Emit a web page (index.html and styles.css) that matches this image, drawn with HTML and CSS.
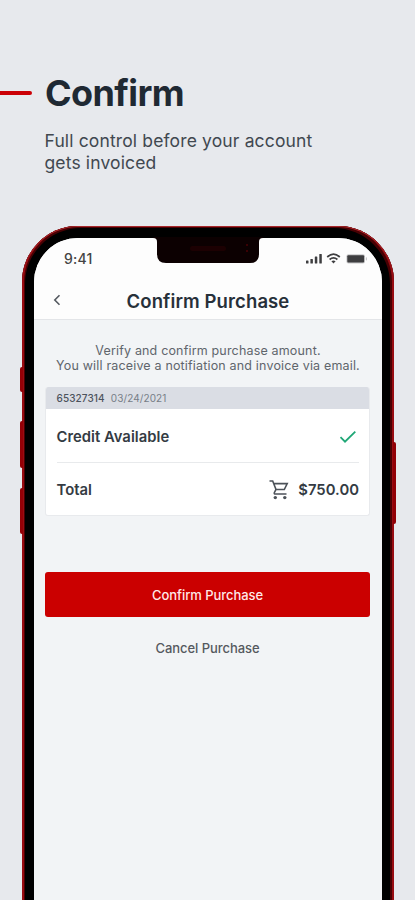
FILE: index.html
```html
<!DOCTYPE html>
<html lang="en">
<head>
<meta charset="utf-8">
<meta name="viewport" content="width=device-width, initial-scale=1">
<title>Confirm</title>
<link rel="stylesheet" href="styles.css">
</head>
<body>
<header class="intro">
  <div class="intro-row"><span class="accent"></span><h1>Confirm</h1></div>
  <p>Full control before your account<br>gets invoiced</p>
</header>
<div class="phone">
  <i class="side mute"></i><i class="side vol-up"></i><i class="side vol-down"></i><i class="side power"></i>
  <svg class="notch" viewBox="0 0 110 27"><path d="M0 0H110V1C107 1 106 2.500 106 5V17Q106 26 97 26H13Q4 26 4 17V5C4 2.500 3 1 0 1Z" fill="#0c0001"/><rect x="37" y="9" width="36" height="5" rx="2.500" fill="#1c0002"/><circle cx="94" cy="8" r="1" fill="#4a0005"/><circle cx="94" cy="14" r="1" fill="#4a0005"/></svg>
  <main class="screen">
    <div class="top">
      <div class="status">
        <span class="time">9:41</span>
        <svg width="62" height="14" viewBox="0 0 62 14" fill="#3e3e40">
          <rect x="0" y="8.500" width="2.500" height="3" rx=".6"/><rect x="4.400" y="7" width="2.500" height="4.500" rx=".6"/><rect x="8.800" y="4.500" width="2.500" height="7" rx=".6"/><rect x="13.300" y="2" width="2.500" height="9.500" rx=".6"/>
          <g fill="none" stroke="#3e3e40" stroke-width="1.700"><path d="M21.200 5Q27.500-.6 33.800 5"/><path d="M23.600 7.500Q27.500 4.200 31.400 7.500"/></g><path d="M25.400 9.200Q27.500 7.600 29.600 9.200L27.500 11.500Z"/>
          <rect x="40.400" y="2.200" width="18.600" height="9.300" rx="2" fill="#c9c9ca"/><rect x="41.300" y="3.200" width="16.800" height="7.300" rx="1"/><rect x="59.800" y="5.200" width="1.200" height="3.200" rx=".6" fill="#c9c9ca"/>
        </svg>
      </div>
      <div class="nav">
        <svg class="back" width="8" height="12" viewBox="0 0 8 12"><path d="M6.500 1.300L1.800 6L6.500 10.700" fill="none" stroke="#555a61" stroke-width="1.600"/></svg>
        <h2>Confirm Purchase</h2>
      </div>
    </div>
    <p class="note">Verify and confirm purchase amount.<br>You will raceive a notifiation and invoice via email.</p>
    <section class="card">
      <div class="card-head"><b>65327314</b><span>03/24/2021</span></div>
      <div class="row first"><span>Credit Available</span>
        <svg width="18" height="14" viewBox="0 0 18 14"><path d="M1.500 7.200L6 11.700L16.300 1.700" fill="none" stroke="#1fa776" stroke-width="1.800"/></svg>
      </div>
      <div class="row"><span>Total</span>
        <span class="price"><svg width="20" height="20" viewBox="0 0 20 20"><path d="M.5 1H3.700L7 9.500L5.300 12.700Q5 14 6.300 14H17.500M4.500 3.600H18.200L15.300 9.500H7" fill="none" stroke="#4c5259" stroke-width="1.600"/><circle cx="6.300" cy="17.600" r="1.700" fill="#4c5259"/><circle cx="15.800" cy="17.600" r="1.700" fill="#4c5259"/></svg><b>$750.00</b></span>
      </div>
    </section>
    <button class="confirm">Confirm Purchase</button>
    <button class="cancel">Cancel Purchase</button>
  </main>
</div>
</body>
</html>
```
FILE: styles.css
```css
* { box-sizing: border-box; }
body { margin: 0; height: 900px; overflow: hidden; background: #e7e9ed; font-family: Inter, "Liberation Sans", sans-serif; color: #2b323b; }
h1, h2, p { margin: 0; }
svg { display: block; flex: none; }
.intro { height: 226px; padding-top: 71px; }
.intro-row { display: flex; align-items: center; height: 44px; }
.accent { width: 32px; height: 4px; margin-right: 13px; background: #cb0006; border-radius: 0 2px 2px 0; }
h1 { font-size: 36px; line-height: 44px; font-weight: 700; letter-spacing: -.6px; color: #1f2933; }
.intro p { margin: 15px 0 0 44.500px; font-size: 17.500px; line-height: 22px; letter-spacing: .14px; color: #414850; }
.phone { position: relative; width: 372px; height: 674px; margin-left: 22px; padding: 12px 12px 0; border-radius: 56px 56px 0 0; background: #000; box-shadow: inset 0 1px 0 #a8272b, inset 2px 0 0 #990c12, inset -2px 0 0 #990c12, inset 3px 2px 0 #480003, inset -4px 2px 0 #480003; }
.screen { height: 662px; background: #f2f4f6; border-radius: 44px 44px 0 0; overflow: hidden; }
.notch { position: absolute; left: 131px; top: 11px; width: 110px; height: 27px; }
.side { position: absolute; left: -2px; width: 3px; background: #930006; border-radius: 2px 0 0 2px; }
.mute { top: 141px; height: 25px; }
.vol-up { top: 195px; height: 47px; }
.vol-down { top: 262px; height: 46px; }
.power { left: auto; right: -2px; top: 216px; height: 82px; border-radius: 0 2px 2px 0; }
.top { height: 82px; background: #fdfdfd; border-bottom: 1px solid #e3e5e8; }
.status { height: 42px; padding: 0 14px 0 30px; display: flex; justify-content: space-between; align-items: center; }
.time { font-size: 14px; line-height: 18px; letter-spacing: .2px; font-weight: 500; color: #444; }
.nav { height: 40px; display: grid; grid-template-columns: 27px 1fr 27px; align-items: center; }
.back { justify-self: end; margin-bottom: 1px; }
h2 { text-align: center; font-size: 18.500px; line-height: 22px; font-weight: 600; letter-spacing: .1px; color: #27303a; padding-top: 2px; }
.note { margin-top: 23px; text-align: center; font-size: 12.500px; line-height: 15px; letter-spacing: .17px; color: #60656c; white-space: nowrap; }
.card { margin: 14px 12px 0 11px; height: 129px; background: #fff; border: 1px solid #e8eaed; border-top: 0; border-radius: 3px; overflow: hidden; }
.card-head { height: 22px; margin: 0 -1px; padding-left: 11.500px; display: flex; align-items: center; gap: 6px; background: #dadde4; font-size: 10px; letter-spacing: .1px; color: #777d87; }
.card-head b { font-weight: 500; color: #4c535d; }
.row { height: 53px; margin: 0 10px 0 10.500px; display: flex; align-items: center; justify-content: space-between; font-size: 14.800px; font-weight: 600; letter-spacing: .03px; color: #343b43; }
.row.first { height: 54px; border-bottom: 1px solid #e8eaec; padding: 2px 2px 0 0; }
.price { display: flex; align-items: center; gap: 9px; }
.price b { font-weight: 600; }
button { display: block; border: 0; padding: 0; font: 500 13px/16px Inter, "Liberation Sans", sans-serif; letter-spacing: -.06px; }
.confirm { width: 325px; height: 45px; margin: 56px 0 0 11px; border-radius: 3px; background: #cb0000; color: #ffe9e9; }
.cancel { width: 325px; height: 30px; margin: 16px 0 0 11px; background: none; color: #55595e; }
```
